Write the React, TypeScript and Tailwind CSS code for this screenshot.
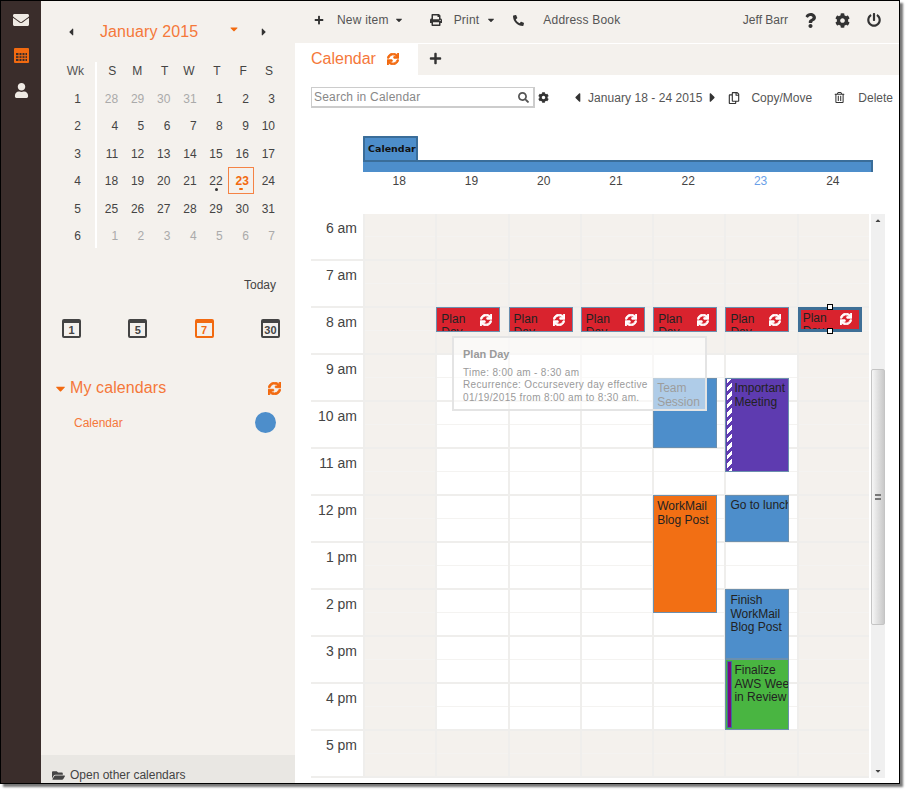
import { ReactNode } from 'react';
import {
  FaCaretDown,
  FaCaretLeft,
  FaCaretRight,
  FaCog,
  FaEnvelope,
  FaFolderOpen,
  FaPhone,
  FaPlus,
  FaPowerOff,
  FaPrint,
  FaQuestion,
  FaRegCopy,
  FaRegTrashAlt,
  FaSearch,
  FaSync,
  FaUser,
} from 'react-icons/fa';

const weeks = [
  ['1', ['28', '29', '30', '31', '1', '2', '3']],
  ['2', ['4', '5', '6', '7', '8', '9', '10']],
  ['3', ['11', '12', '13', '14', '15', '16', '17']],
  ['4', ['18', '19', '20', '21', '22', '23', '24']],
  ['5', ['25', '26', '27', '28', '29', '30', '31']],
  ['6', ['1', '2', '3', '4', '5', '6', '7']],
] as const;

const hours = ['6 am', '7 am', '8 am', '9 am', '10 am', '11 am', '12 pm', '1 pm', '2 pm', '3 pm', '4 pm', '5 pm'];
const headDays = ['S', 'M', 'T', 'W', 'T', 'F', 'S'];
const dayNumbers = ['18', '19', '20', '21', '22', '23', '24'];

function CalendarNavIcon() {
  return (
    <svg width="15" height="15" viewBox="0 0 15 15">
      <rect width="15" height="15" rx="1" fill="#f26a10" />
      <path d="M2 5h11v8H2z" fill="#3a2d2b" />
      <path d="M5 5v8M8 5v8M11 5v8M2 7.7h11M2 10.4h11" stroke="#f26a10" strokeWidth="1" />
    </svg>
  );
}

function Refresh({ className }: { className: string }) {
  return <FaSync className={className} strokeWidth={36} />;
}

function ViewIcon({ label, active }: { label: string; active?: boolean }) {
  return (
    <div
      className={`flex h-[19px] w-[19px] items-center justify-center rounded-[2px] border-2 border-t-[4px] pt-px text-[11px] leading-none font-bold ${
        active ? 'border-[#f26a10] text-[#f26a10]' : 'border-[#444] text-[#444]'
      }`}
    >
      {label}
    </div>
  );
}

function Sidebar() {
  return (
    <nav className="flex w-10 shrink-0 flex-col items-center gap-[20px] bg-[#3a2d2b] pt-[11px]">
      <FaEnvelope className="text-[16px] text-[#efeae4]" />
      <CalendarNavIcon />
      <FaUser className="text-[15px] text-[#efeae4]" />
    </nav>
  );
}

function MiniCalendar() {
  return (
    <div className="pl-[19px]">
      <div className="flex h-[38px] items-center text-[#333]">
        <FaCaretLeft className="ml-[5px] text-[12px]" />
        <span className="ml-[23px] text-[16px] tracking-[0.1px] text-[#f5783a]">January 2015</span>
        <FaCaretDown className="mb-1.5 ml-[30px] text-[12px] text-[#f26a10]" />
        <FaCaretRight className="ml-[18px] text-[12px]" />
      </div>
      <div className="flex items-start pt-[11px] text-[12px] text-[#444]">
        <div className="h-[186px] w-[37px] border-r-2 border-white pr-[9px]">
          <div className="h-[26px] pr-[2px] text-right text-[#555]">Wk</div>
          {weeks.map(([wk]) => (
            <div key={wk} className="h-[27.4px] pt-[2px] pr-[5px] text-right">
              {wk}
            </div>
          ))}
        </div>
        <div className="-ml-[2px] w-[183px]">
          <div className="grid h-[26px] grid-cols-7">
            {headDays.map((d, i) => (
              <div key={i} className="pr-[5px] text-right">
                {d}
              </div>
            ))}
          </div>
          {weeks.map(([wk, days]) => (
            <div key={wk} className="grid h-[27.4px] grid-cols-7">
              {days.map((d, i) => {
                const muted = (wk === '1' && i < 4) || wk === '6';
                const today = wk === '4' && d === '23';
                const marked = wk === '4' && d === '22';
                return (
                  <div
                    key={i}
                    className={`relative text-right ${muted ? 'text-[#aaa]' : ''} ${
                      today
                        ? '-mt-[3px] -mr-[2px] ml-[2px] h-[27px] border border-[#f58345] pt-[4px] pr-[4px] font-bold text-[#f26a10]'
                        : 'pt-[2px] pr-[3px]'
                    }`}
                  >
                    {d}
                    {today && <span className="absolute bottom-[3px] left-[10px] h-[2px] w-[4px] rounded-full bg-[#f26a10]" />}
                    {marked && <span className="absolute bottom-[7px] left-[15px] h-[3px] w-[3px] rounded-full bg-[#333]" />}
                  </div>
                );
              })}
            </div>
          ))}
        </div>
      </div>
    </div>
  );
}

function LeftPanel() {
  return (
    <aside className="flex w-[254px] shrink-0 flex-col bg-[#f4f1ed]">
      <div className="pt-[12px]">
        <MiniCalendar />
      </div>
      <div className="mt-[24px] pr-[19px] text-right text-[12px] text-[#444]">Today</div>
      <div className="mt-[25px] flex justify-between pr-[15px] pl-[21px]">
        <ViewIcon label="1" />
        <ViewIcon label="5" />
        <ViewIcon label="7" active />
        <ViewIcon label="30" />
      </div>
      <div className="mt-[38px] flex items-center pr-[14px] pl-[12px] text-[#f5783a]">
        <FaCaretDown className="text-[15px] text-[#f26a10]" />
        <span className="ml-[2px] text-[16px] tracking-[0.1px]">My calendars</span>
        <Refresh className="ml-auto text-[13px] text-[#f26a10]" />
      </div>
      <div className="mt-[12px] flex items-center pr-[19px] pl-[33px]">
        <span className="text-[12px] text-[#f5783a]">Calendar</span>
        <span className="ml-auto h-[21px] w-[21px] rounded-full bg-[#4d8ecb]" />
      </div>
      <div className="mt-auto flex h-[28px] items-start gap-[5px] bg-[#e9e7e3] pt-[13px] pl-[11px] text-[12px] leading-[14px] text-[#444]">
        <FaFolderOpen className="mt-px text-[13px]" />
        <span>Open other calendars</span>
      </div>
    </aside>
  );
}

function TopBar() {
  return (
    <div className="flex h-[42px] items-center bg-[#f4f1ed] pr-[18px] pb-[4px] text-[12px] tracking-[0.2px] text-[#555]">
      <FaPlus className="ml-[19px] text-[10px] text-[#333]" />
      <span className="ml-[13px]">New item</span>
      <FaCaretDown className="ml-[5px] text-[10px] text-[#333]" />
      <FaPrint className="ml-[26px] text-[12px] text-[#333]" />
      <span className="ml-[12px]">Print</span>
      <FaCaretDown className="ml-[7px] text-[10px] text-[#333]" />
      <FaPhone className="ml-[17px] text-[11px] text-[#333] [transform:scaleX(-1)]" />
      <span className="ml-[19px]">Address Book</span>
      <span className="ml-auto tracking-normal">Jeff Barr</span>
      <FaQuestion className="ml-[15px] text-[15px] text-[#333]" />
      <FaCog className="ml-[17px] text-[15px] text-[#333]" />
      <FaPowerOff className="ml-[17px] text-[14px] text-[#333]" />
    </div>
  );
}

function Tabs() {
  return (
    <div className="mt-px flex h-[31px] bg-[#f4f1ed]">
      <div className="flex w-[123px] items-center bg-white pb-[2px] pl-[16px] text-[16px] text-[#f5783a]">
        Calendar
        <Refresh className="ml-[11px] text-[12px] text-[#f26a10]" />
      </div>
      <div className="flex items-center pb-[2px] pl-[11px]">
        <FaPlus className="text-[13px] text-[#333]" />
      </div>
    </div>
  );
}

function Toolbar() {
  return (
    <div className="flex h-[21px] items-center pr-[6px] pl-[16px] text-[12px] text-[#555]">
      <div className="flex h-[21px] w-[224px] items-center justify-between border-2 border-t border-l border-[#ccc] pr-[4px] pl-[2px] tracking-[0.2px] text-[#888]">
        <span>Search in Calendar</span>
        <FaSearch className="text-[11px] text-[#555]" />
      </div>
      <FaCog className="ml-[3px] text-[11px] text-[#333]" />
      <FaCaretLeft className="ml-[21px] text-[15px] text-[#333]" />
      <span className="ml-[3px] tracking-[0.05px] whitespace-nowrap">January 18 - 24 2015</span>
      <FaCaretRight className="ml-[3px] text-[15px] text-[#333]" />
      <FaRegCopy className="ml-[8px] text-[12px] text-[#333]" />
      <span className="ml-[11px]">Copy/Move</span>
      <FaRegTrashAlt className="ml-auto text-[11px] text-[#333]" />
      <span className="ml-[13px]">Delete</span>
    </div>
  );
}

function CalendarStrip() {
  return (
    <div className="mt-[28px] pl-[68px]">
      <div className="w-[510px]">
        <div className="flex h-[24px] w-[55px] items-center rounded-t-[1px] border-2 border-b-0 border-[#3a6d99] bg-[#4d8ecb] pl-[3px] font-['DejaVu_Sans'] text-[9.5px] font-bold text-[#111]">
          Calendar
        </div>
        <div className="h-[12px] border-t-2 border-r-2 border-[#3a6d99] bg-[#4d8ecb]" />
      </div>
      <div className="grid w-[506px] grid-cols-7 pt-[2px] text-center text-[12px] leading-[14px] text-[#444]">
        {dayNumbers.map((d) => (
          <div key={d} className={d === '23' ? 'text-[#6a9fe8]' : ''}>
            {d}
          </div>
        ))}
      </div>
    </div>
  );
}

function Event({
  top,
  height,
  color,
  selected,
  children,
}: {
  top: number;
  height: number;
  color: string;
  selected?: boolean;
  children: ReactNode;
}) {
  return (
    <div
      className={`absolute left-[-1px] w-[64px] overflow-hidden ${selected ? 'border-[3px] border-[#3e6f96]' : 'border border-[#6b8fae]'} ${color}`}
      style={{ top, height }}
    >
      {children}
    </div>
  );
}

function PlanDay({ selected }: { selected?: boolean }) {
  return (
    <>
      <Event top={93} height={25} color="bg-[#d9232e]" selected={selected}>
        <div className={`flex justify-between pr-[7px] text-[12px] leading-[13px] text-[#222] ${selected ? 'pt-[2px] pl-[2px]' : 'pt-[5px] pl-[4px]'}`}>
          <span className="w-[30px]">Plan Day</span>
          <Refresh className="mt-px text-[12px] text-white" />
        </div>
      </Event>
      {selected && (
        <>
          <span className="absolute top-[90px] left-[28px] h-[6px] w-[6px] border border-black bg-white" />
          <span className="absolute top-[114px] left-[28px] h-[6px] w-[6px] border border-black bg-white" />
        </>
      )}
    </>
  );
}

function EventText({ children, className = 'pt-[3px] pl-[4px]' }: { children: ReactNode; className?: string }) {
  return <div className={`text-[12px] leading-[13.5px] whitespace-nowrap text-[#222] ${className}`}>{children}</div>;
}

function DayColumn({ index }: { index: number }) {
  const weekend = index === 0 || index === 6;
  return (
    <div className="relative border-l-2 border-[#efeeec]">
      {hours.map((h, i) => {
        const working = !weekend && i >= 3 && i <= 10;
        return (
          <div key={h} className={`h-[47px] border-b-2 border-[#efeeec] ${working ? 'bg-white' : 'bg-[#f4f1ed]'}`}>
            <div className="h-[23px] border-b border-[#f4f3f1]" />
          </div>
        );
      })}
      {index >= 1 && <PlanDay selected={index === 6} />}
      {index === 4 && (
        <>
          <Event top={164} height={70} color="bg-[#4d8ecb]">
            <EventText className="pt-[3px] pl-[3px]">
              Team
              <br />
              Session
            </EventText>
          </Event>
          <Event top={281} height={118} color="bg-[#f26f14]">
            <EventText className="pt-[4px] pl-[3px]">
              WorkMail
              <br />
              Blog Post
            </EventText>
          </Event>
        </>
      )}
      {index === 5 && (
        <>
          <Event top={164} height={94} color="bg-[#5e3bb0]">
            <div className="flex h-full">
              <div className="ml-px h-full w-[5px] shrink-0 bg-[repeating-linear-gradient(135deg,#ffffff_0,#ffffff_3px,#5e3bb0_3px,#5e3bb0_6px)]" />
              <EventText className="pt-[3px] pl-[2px]">
                Important
                <br />
                Meeting
              </EventText>
            </div>
          </Event>
          <Event top={281} height={47} color="bg-[#4d8ecb]">
            <EventText>Go to lunch</EventText>
          </Event>
          <Event top={375} height={70} color="bg-[#4d8ecb]">
            <EventText className="pt-[4px] pl-[4px]">
              Finish
              <br />
              WorkMail
              <br />
              Blog Post
            </EventText>
          </Event>
          <Event top={445} height={71} color="bg-[#49b541]">
            <div className="flex h-full">
              <div className="m-[1px] w-[5px] shrink-0 border border-[#3e6f96] bg-[#7a0a80]" />
              <EventText className="pt-[4px] pl-[1px]">
                Finalize
                <br />
                AWS Week
                <br />
                in Review
              </EventText>
            </div>
          </Event>
        </>
      )}
    </div>
  );
}

function Scrollbar() {
  return (
    <div className="ml-[2px] flex h-[564px] w-[14px] flex-col items-center bg-[#f0f0f0]">
      <FaCaretDown className="mt-[3px] h-[8px] rotate-180 text-[8px] text-[#444]" />
      <div className="mt-[144px] flex h-[256px] w-[14px] items-center justify-center rounded-[2px] border border-[#c4c4c4] bg-gradient-to-r from-[#f6f6f6] to-[#c9c9c9]">
        <div className="h-[6px] w-[6px] border-y-2 border-[#777]" />
      </div>
      <FaCaretDown className="mt-auto mb-[3px] h-[8px] text-[8px] text-[#444]" />
    </div>
  );
}

function WeekGrid() {
  return (
    <div className="relative mt-[26px] flex pl-[16px]">
      <div className="w-[52px] shrink-0">
        {hours.map((h) => (
          <div key={h} className="h-[47px] border-b-2 border-[#efeeec] pt-[6px] pr-[6px] text-right text-[14px] leading-[16px] text-[#444]">
            {h}
          </div>
        ))}
      </div>
      <div className="grid w-[506px] shrink-0 grid-cols-7">
        {dayNumbers.map((d, i) => (
          <DayColumn key={d} index={i} />
        ))}
      </div>
      <Scrollbar />
      <div className="absolute top-[122px] left-[157px] z-10 h-[75px] w-[255px] border-2 border-[#e4e4e4] bg-white/55 pt-[10px] pl-[9px] text-[10px] leading-[12.5px] tracking-[0.34px] text-[#9a9a9a]">
        <div className="mb-[6px] text-[11px] font-bold tracking-normal">Plan Day</div>
        <div>Time: 8:00 am - 8:30 am</div>
        <div className="whitespace-nowrap">Recurrence: Occursevery day effective</div>
        <div className="whitespace-nowrap">01/19/2015 from 8:00 am to 8:30 am.</div>
      </div>
    </div>
  );
}

export default function App() {
  return (
    <div className="h-[793px] w-[910px] bg-white font-['Liberation_Sans',Arial,sans-serif]">
      <div className="flex h-[784px] w-[900px] overflow-hidden border border-black shadow-[3px_3px_2px_#777]">
        <Sidebar />
        <LeftPanel />
        <main className="min-w-0 flex-1 overflow-hidden bg-white">
          <TopBar />
          <Tabs />
          <div className="mt-[12px]">
            <Toolbar />
          </div>
          <CalendarStrip />
          <WeekGrid />
        </main>
      </div>
    </div>
  );
}
